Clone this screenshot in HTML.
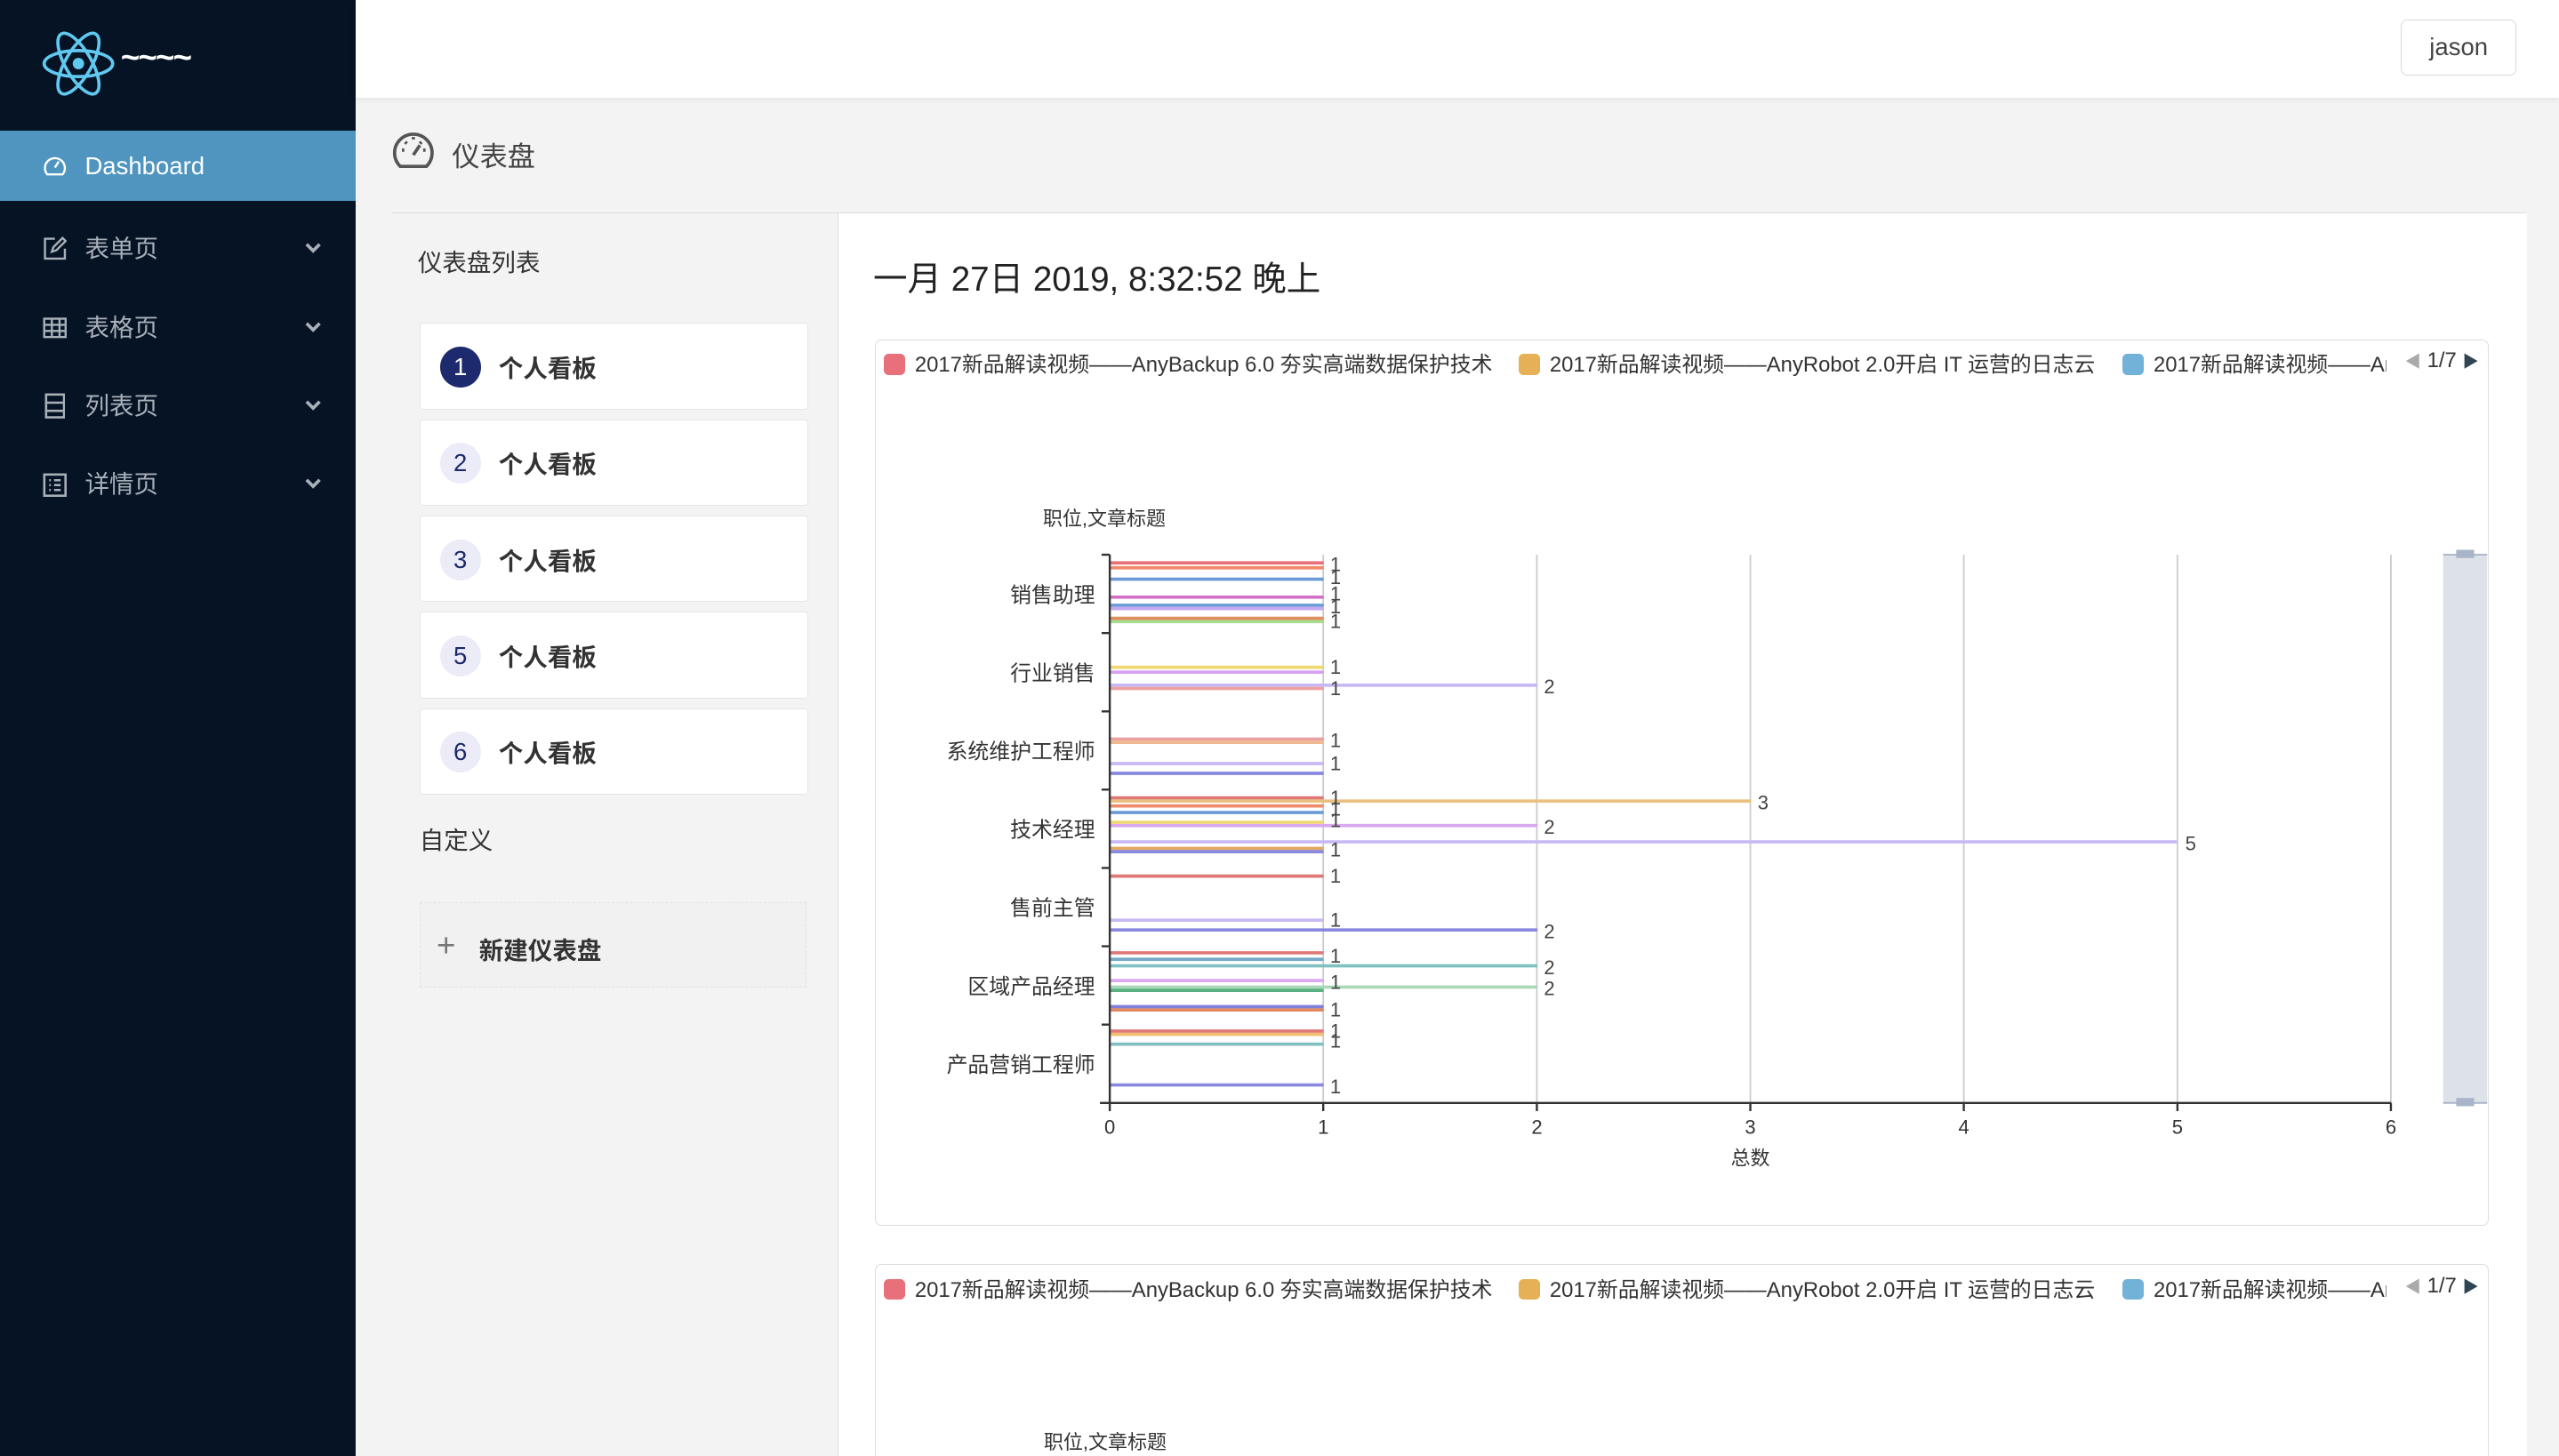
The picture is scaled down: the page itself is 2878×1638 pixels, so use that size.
<!DOCTYPE html>
<html><head><meta charset="utf-8">
<style>
html,body{margin:0;padding:0;width:2878px;height:1638px;overflow:hidden;background:#f3f3f3}
#w{zoom:1.83546;width:1568px;height:892.4px;position:relative;overflow:hidden;font-family:"Liberation Sans","Noto Sans CJK SC",sans-serif;color:#333}
.a{position:absolute}
.side{left:0;top:0;width:218px;height:893px;background:#051325}
.mi{position:absolute;left:0;width:218px;height:44px;color:#a9b0b8;font-size:15px;line-height:44px}
.mi .t{position:absolute;left:52px}
.mi .ch{position:absolute;left:187px;top:18px}
.card{position:absolute;left:257px;width:237px;height:52px;background:#fff;border:1px solid #e6e6e6;border-radius:2px}
.card .c{position:absolute;left:12px;top:14px;width:25px;height:25px;border-radius:50%;background:#ececf8;color:#1d2a6b;font-size:15px;text-align:center;line-height:25px}
.card .n{position:absolute;left:48px;top:15px;font-size:15px;font-weight:bold;color:#333}
.box{position:absolute;left:536px;width:988px;background:#fff;border:1px solid #ddd;border-radius:4px}
.lg{position:absolute;top:4px;font-size:13px;color:#333;white-space:nowrap}
.sq{display:inline-block;width:13px;height:13px;border-radius:3px;vertical-align:-2px;margin-right:6px}
</style></head><body><div id="w">
<div class="a side">
 <svg class="a" style="left:25px;top:18px" width="46" height="42" viewBox="-23 -21 46 42" fill="none" stroke="#61c8f0" stroke-width="2">
  <ellipse rx="21" ry="8"/><ellipse rx="21" ry="8" transform="rotate(60)"/><ellipse rx="21" ry="8" transform="rotate(-60)"/><circle r="3.5" fill="#61c8f0" stroke="none"/></svg>
 <div class="a" style="left:74px;top:24px;color:#fff;font-size:20px;font-weight:bold;letter-spacing:-1px">~~~~</div>
 <div class="mi" style="top:80px;height:43px;background:#4f95bf;color:#fff">
  <svg class="a" style="left:26px;top:14px" width="15" height="15" viewBox="0 0 16 16" fill="none" stroke="#fff" stroke-width="1.4"><path d="M3 13.5A6.5 6.5 0 1 1 13 13.5Z"/><path d="M8 9l2.5-4"/></svg>
  <span class="t">Dashboard</span></div>
 <div class="mi" style="top:131px"><svg class="a" style="left:26px;top:14px" width="15" height="15" viewBox="0 0 16 16" fill="none" stroke="#a9b0b8" stroke-width="1.4"><path d="M8 1.5H1.5v13h13V8"/><path d="M6 10l1-3 6-6 2 2-6 6z"/></svg><span class="t">表单页</span><svg class="ch" width="10" height="7" viewBox="0 0 10 7"><path d="M1 1l4 4 4-4" fill="none" stroke="#a9b0b8" stroke-width="2"/></svg></div>
 <div class="mi" style="top:179px"><svg class="a" style="left:26px;top:15px" width="15" height="14" viewBox="0 0 16 14" fill="none" stroke="#a9b0b8" stroke-width="1.4"><rect x="1" y="1" width="14" height="12"/><path d="M1 5h14M1 9h14M6 1v12M11 1v12"/></svg><span class="t">表格页</span><svg class="ch" width="10" height="7" viewBox="0 0 10 7"><path d="M1 1l4 4 4-4" fill="none" stroke="#a9b0b8" stroke-width="2"/></svg></div>
 <div class="mi" style="top:227px"><svg class="a" style="left:27px;top:14px" width="13" height="16" viewBox="0 0 13 16" fill="none" stroke="#a9b0b8" stroke-width="1.4"><rect x="1" y="1" width="11" height="14"/><path d="M1 6h11M1 11h11"/></svg><span class="t">列表页</span><svg class="ch" width="10" height="7" viewBox="0 0 10 7"><path d="M1 1l4 4 4-4" fill="none" stroke="#a9b0b8" stroke-width="2"/></svg></div>
 <div class="mi" style="top:275px"><svg class="a" style="left:26px;top:15px" width="15" height="15" viewBox="0 0 15 15" fill="none" stroke="#a9b0b8" stroke-width="1.4"><rect x="1" y="1" width="13" height="13"/><path d="M4 4.5h1M4 7.5h1M4 10.5h1M7 4.5h4M7 7.5h4M7 10.5h4"/></svg><span class="t">详情页</span><svg class="ch" width="10" height="7" viewBox="0 0 10 7"><path d="M1 1l4 4 4-4" fill="none" stroke="#a9b0b8" stroke-width="2"/></svg></div>
</div>
<div class="a" style="left:218px;top:0;width:1350px;height:60px;background:#fff;box-shadow:0 1px 4px rgba(0,0,0,.08)"></div>
<div class="a" style="left:1471px;top:12px;width:70px;height:33px;border:1px solid #d9d9d9;border-radius:4px;background:#fff;text-align:center;line-height:33px;font-size:15px;color:#444">jason</div>
<svg class="a" style="left:240px;top:79px" width="26" height="26" viewBox="0 0 26 26" fill="none" stroke="#555" stroke-width="2"><path d="M5 23A11.5 11.5 0 1 1 21 23Z"/><path d="M13 16l4-6M6 13h1.5M19 13h1.5M13 5v1.5M8 8l1 1M18 8l-1 1"/></svg>
<div class="a" style="left:277px;top:82px;font-size:17px;color:#444">仪表盘</div>
<div class="a" style="left:240px;top:130px;width:1308px;height:1px;background:#dcdcdc"></div>
<div class="a" style="left:513px;top:131px;width:1035px;height:762px;background:#fff;border-left:1px solid #e0e0e0"></div>
<div class="a" style="left:256px;top:149px;font-size:15px;color:#333">仪表盘列表</div>
<div class="card" style="top:198px"><div class="c" style="background:#1e2a6e;color:#fff">1</div><div class="n">个人看板</div></div>
<div class="card" style="top:257px"><div class="c">2</div><div class="n">个人看板</div></div>
<div class="card" style="top:316px"><div class="c">3</div><div class="n">个人看板</div></div>
<div class="card" style="top:375px"><div class="c">5</div><div class="n">个人看板</div></div>
<div class="card" style="top:434px"><div class="c">6</div><div class="n">个人看板</div></div>
<div class="a" style="left:257px;top:503px;font-size:15px;color:#333">自定义</div>
<div class="a" style="left:257px;top:553px;width:236px;height:51px;border:1px dashed #e2e2e2;background:#f1f1f1"><span class="a" style="left:10px;top:14px;font-size:20px;color:#777;line-height:24px">+</span><span class="a" style="left:36px;top:17px;font-size:15px;font-weight:bold;color:#333">新建仪表盘</span></div>
<div class="a" style="left:535px;top:154px;font-size:21px;color:#222">一月 27日 2019, 8:32:52 晚上</div>

<div class="box" style="top:208px;height:542px">
 <div class="lg" style="left:5px"><span class="sq" style="background:#e8707a"></span>2017新品解读视频——AnyBackup 6.0 夯实高端数据保护技术</div>
 <div class="lg" style="left:394px"><span class="sq" style="background:#e6b156"></span>2017新品解读视频——AnyRobot 2.0开启 IT 运营的日志云</div>
 <div class="lg" style="left:764px;width:162px;overflow:hidden"><span class="sq" style="background:#72b2d9"></span>2017新品解读视频——AnyBackup</div>
 <div class="lg" style="left:937px;top:5px"><span style="color:#aaa;font-size:10px">◀</span> 1/7 <span style="color:#2f4554;font-size:10px">▶</span></div>
</div>
<div class="box" style="top:775px;height:130px">
 <div class="lg" style="left:5px"><span class="sq" style="background:#e8707a"></span>2017新品解读视频——AnyBackup 6.0 夯实高端数据保护技术</div>
 <div class="lg" style="left:394px"><span class="sq" style="background:#e6b156"></span>2017新品解读视频——AnyRobot 2.0开启 IT 运营的日志云</div>
 <div class="lg" style="left:764px;width:162px;overflow:hidden"><span class="sq" style="background:#72b2d9"></span>2017新品解读视频——AnyBackup</div>
 <div class="lg" style="left:937px;top:5px"><span style="color:#aaa;font-size:10px">◀</span> 1/7 <span style="color:#2f4554;font-size:10px">▶</span></div>
 <div class="a" style="left:103px;top:99px;font-size:12px;color:#333">职位,文章标题</div>
</div>

<svg class="a" style="left:0;top:0" width="1568" height="893" font-family="Liberation Sans, Noto Sans CJK SC, sans-serif" font-size="12" fill="#333">
<g stroke="#ccc" stroke-width="1">
<line x1="810.8" y1="340" x2="810.8" y2="676"/><line x1="941.7" y1="340" x2="941.7" y2="676"/><line x1="1072.5" y1="340" x2="1072.5" y2="676"/><line x1="1203.3" y1="340" x2="1203.3" y2="676"/><line x1="1334.2" y1="340" x2="1334.2" y2="676"/><line x1="1465" y1="340" x2="1465" y2="676"/>
</g>
<g stroke-width="2">
<line x1="680" x2="811" y1="345" y2="345" stroke="#e8707a"/><line x1="680" x2="811" y1="348" y2="348" stroke="#ef8a6a"/><line x1="680" x2="811" y1="355" y2="355" stroke="#6a9bd8"/><line x1="680" x2="811" y1="366" y2="366" stroke="#d270c8"/><line x1="680" x2="811" y1="371" y2="371" stroke="#6a9bd8"/><line x1="680" x2="811" y1="373" y2="373" stroke="#c5a8f0"/><line x1="680" x2="811" y1="379" y2="379" stroke="#e09060"/><line x1="680" x2="811" y1="381" y2="381" stroke="#a8dc90"/>
<line x1="680" x2="811" y1="409" y2="409" stroke="#f0d870"/><line x1="680" x2="811" y1="412" y2="412" stroke="#d8a0f0"/><line x1="680" x2="942" y1="420" y2="420" stroke="#c8b8f4"/><line x1="680" x2="811" y1="422" y2="422" stroke="#eea0a0"/>
<line x1="680" x2="811" y1="453" y2="453" stroke="#eba0a0"/><line x1="680" x2="811" y1="455" y2="455" stroke="#f0b890"/><line x1="680" x2="811" y1="468" y2="468" stroke="#c8b8f4"/><line x1="680" x2="811" y1="474" y2="474" stroke="#8888e0"/>
<line x1="680" x2="811" y1="489" y2="489" stroke="#e07878"/><line x1="680" x2="1073" y1="491" y2="491" stroke="#eac080"/><line x1="680" x2="811" y1="494" y2="494" stroke="#ef8a6a"/><line x1="680" x2="811" y1="498" y2="498" stroke="#6a9bd8"/><line x1="680" x2="811" y1="504" y2="504" stroke="#f0d870"/><line x1="680" x2="942" y1="506" y2="506" stroke="#daa8f0"/><line x1="680" x2="1334" y1="516" y2="516" stroke="#c8b8f4"/><line x1="680" x2="811" y1="520" y2="520" stroke="#e0a860"/><line x1="680" x2="811" y1="522" y2="522" stroke="#8888e0"/>
<line x1="680" x2="811" y1="537" y2="537" stroke="#e07878"/><line x1="680" x2="811" y1="564" y2="564" stroke="#c8b8f4"/><line x1="680" x2="942" y1="570" y2="570" stroke="#8888e0"/>
<line x1="680" x2="811" y1="584" y2="584" stroke="#e07878"/><line x1="680" x2="811" y1="588" y2="588" stroke="#78a8c8"/><line x1="680" x2="942" y1="592" y2="592" stroke="#80c0c0"/><line x1="680" x2="811" y1="601" y2="601" stroke="#daa8f0"/><line x1="680" x2="942" y1="605" y2="605" stroke="#a8d8b8"/><line x1="680" x2="811" y1="607" y2="607" stroke="#58b080"/><line x1="680" x2="811" y1="617" y2="617" stroke="#8080d8"/><line x1="680" x2="811" y1="619" y2="619" stroke="#e08860"/>
<line x1="680" x2="811" y1="632" y2="632" stroke="#e07878"/><line x1="680" x2="811" y1="634" y2="634" stroke="#f0c070"/><line x1="680" x2="811" y1="640" y2="640" stroke="#80c0c0"/><line x1="680" x2="811" y1="665" y2="665" stroke="#8888e0"/>
</g>
<g stroke="#333" stroke-width="1.3">
<line x1="680" y1="340" x2="680" y2="676"/><line x1="674" y1="676" x2="1465" y2="676"/>
<path d="M675 340h5M675 388h5M675 436h5M675 484h5M675 532h5M675 580h5M675 628h5M680 676v5M810.8 676v5M941.7 676v5M1072.5 676v5M1203.3 676v5M1334.2 676v5M1465 676v5"/>
</g>
<g text-anchor="end" font-size="13"><text x="671" y="369">销售助理</text><text x="671" y="417">行业销售</text><text x="671" y="465">系统维护工程师</text><text x="671" y="513">技术经理</text><text x="671" y="561">售前主管</text><text x="671" y="609">区域产品经理</text><text x="671" y="657">产品营销工程师</text></g>
<text x="639" y="322" font-size="12">职位,文章标题</text>
<g text-anchor="middle" font-size="12"><text x="680" y="695">0</text><text x="810.8" y="695">1</text><text x="941.7" y="695">2</text><text x="1072.5" y="695">3</text><text x="1203.3" y="695">4</text><text x="1334.2" y="695">5</text><text x="1465" y="695">6</text><text x="1072.5" y="714">总数</text></g>
<g font-size="12" fill="#444"><text x="815" y="350">1</text><text x="815" y="358">1</text><text x="815" y="368">1</text><text x="815" y="376">1</text><text x="815" y="385">1</text><text x="815" y="413">1</text><text x="815" y="426">1</text><text x="946" y="425">2</text><text x="815" y="458">1</text><text x="815" y="472">1</text><text x="815" y="493">1</text><text x="815" y="500">1</text><text x="815" y="507">1</text><text x="1077" y="496">3</text><text x="946" y="511">2</text><text x="1339" y="521">5</text><text x="815" y="525">1</text><text x="815" y="541">1</text><text x="815" y="568">1</text><text x="946" y="575">2</text><text x="815" y="590">1</text><text x="946" y="597">2</text><text x="815" y="606">1</text><text x="946" y="610">2</text><text x="815" y="623">1</text><text x="815" y="636">1</text><text x="815" y="642">1</text><text x="815" y="670">1</text></g>
<rect x="1497" y="340" width="27" height="336" fill="#dde1e8"/>
<line x1="1497" y1="340" x2="1524" y2="340" stroke="#a8b4c8" stroke-width="1"/><line x1="1497" y1="676" x2="1524" y2="676" stroke="#a8b4c8" stroke-width="1"/>
<rect x="1505" y="337" width="11" height="5" fill="#a8b4c8"/><rect x="1505" y="673" width="11" height="5" fill="#a8b4c8"/>
</svg>
</div></body></html>
